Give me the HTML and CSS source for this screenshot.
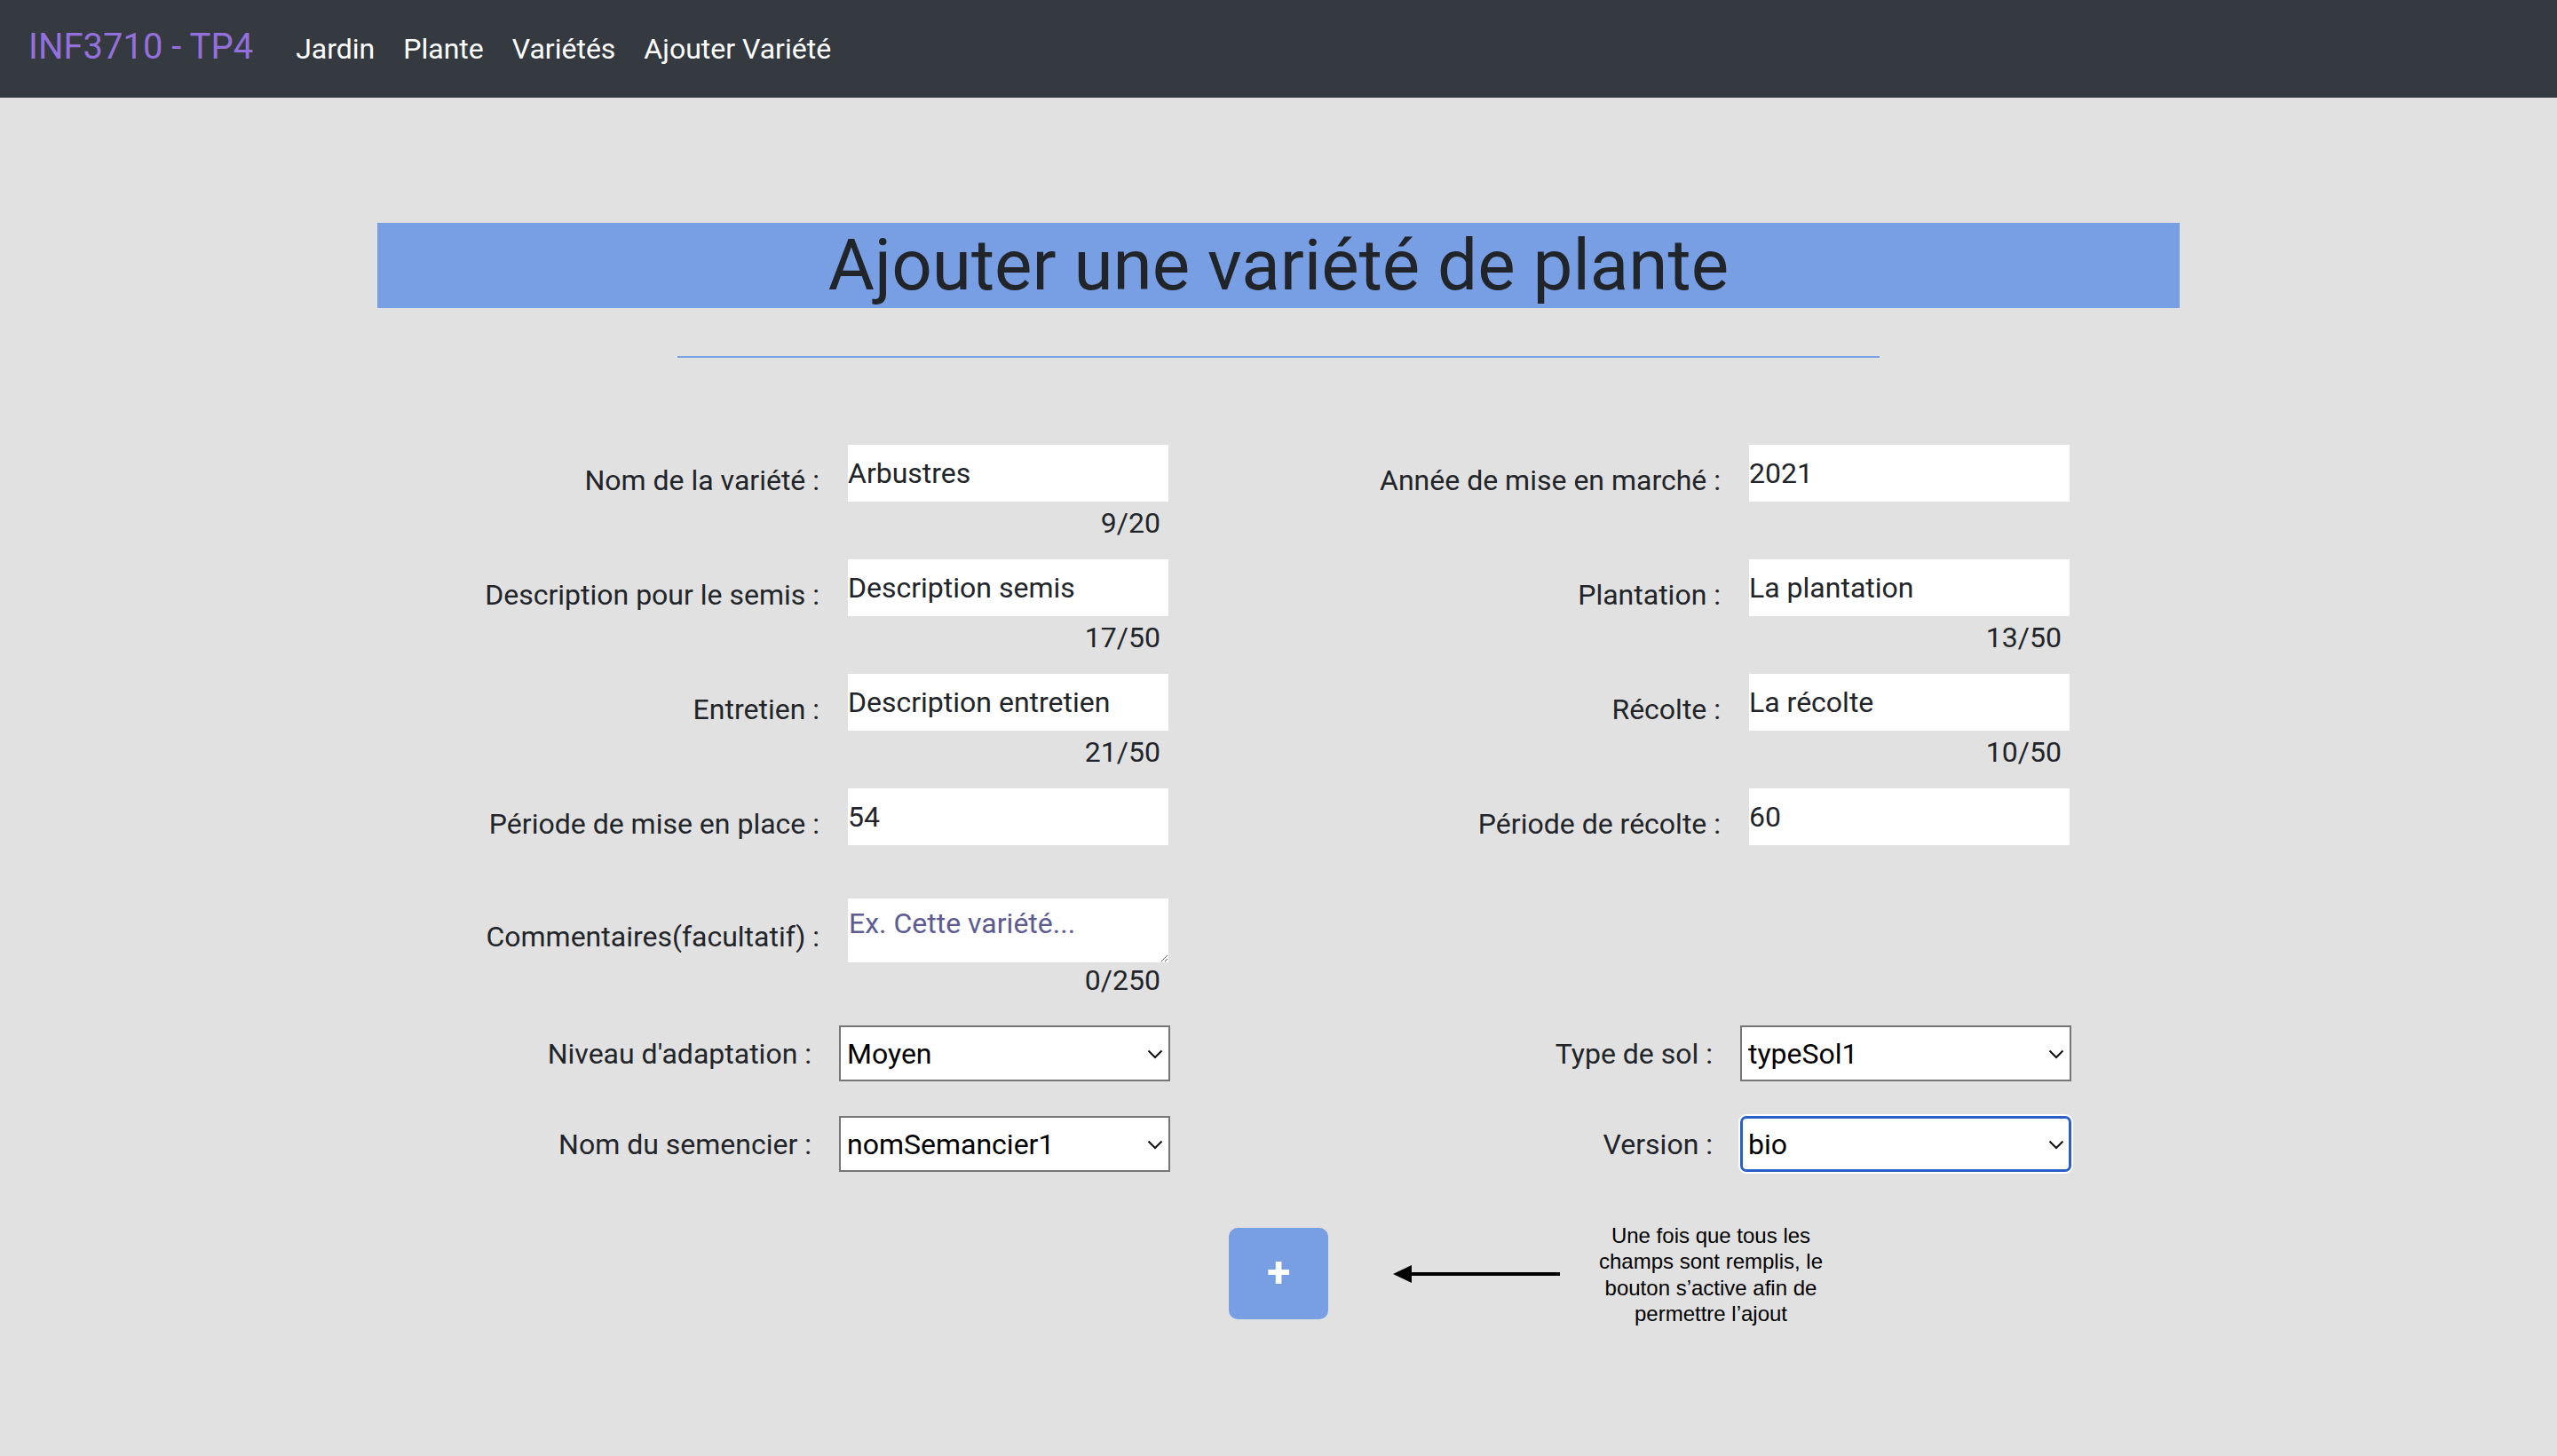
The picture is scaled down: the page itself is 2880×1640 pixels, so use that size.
FILE: index.html
```html
<!DOCTYPE html>
<html lang="fr">
<head>
<meta charset="utf-8">
<title>INF3710 - TP4</title>
<link rel="stylesheet" href="styles.css">
</head>
<body>
<nav class="navbar">
  <a class="brand" href="#">INF3710 - TP4</a>
  <a class="nav-link" href="#">Jardin</a>
  <a class="nav-link" href="#">Plante</a>
  <a class="nav-link" href="#">Variétés</a>
  <a class="nav-link" href="#">Ajouter Variété</a>
</nav>

<main class="page">
  <h1 class="title">Ajouter une variété de plante</h1>
  <div class="divider"></div>

  <form class="form">
    <div class="form-row">
      <div class="field">
        <label class="field-label">Nom de la variété :</label>
        <div class="field-box">
          <input class="text-input" type="text" value="Arbustres">
          <div class="counter">9/20</div>
        </div>
      </div>
      <div class="field">
        <label class="field-label">Année de mise en marché :</label>
        <div class="field-box">
          <input class="text-input" type="text" inputmode="numeric" value="2021">
        </div>
      </div>
    </div>

    <div class="form-row">
      <div class="field">
        <label class="field-label">Description pour le semis :</label>
        <div class="field-box">
          <input class="text-input" type="text" value="Description semis">
          <div class="counter">17/50</div>
        </div>
      </div>
      <div class="field">
        <label class="field-label">Plantation :</label>
        <div class="field-box">
          <input class="text-input" type="text" value="La plantation">
          <div class="counter">13/50</div>
        </div>
      </div>
    </div>

    <div class="form-row">
      <div class="field">
        <label class="field-label">Entretien :</label>
        <div class="field-box">
          <input class="text-input" type="text" value="Description entretien">
          <div class="counter">21/50</div>
        </div>
      </div>
      <div class="field">
        <label class="field-label">Récolte :</label>
        <div class="field-box">
          <input class="text-input" type="text" value="La récolte">
          <div class="counter">10/50</div>
        </div>
      </div>
    </div>

    <div class="form-row row-periods">
      <div class="field">
        <label class="field-label">Période de mise en place :</label>
        <div class="field-box">
          <input class="text-input" type="text" inputmode="numeric" value="54">
        </div>
      </div>
      <div class="field">
        <label class="field-label">Période de récolte :</label>
        <div class="field-box">
          <input class="text-input" type="text" inputmode="numeric" value="60">
        </div>
      </div>
    </div>

    <div class="form-row row-comment">
      <div class="field">
        <label class="field-label label-comment">Commentaires(facultatif) :</label>
        <div class="field-box">
          <textarea class="text-area" placeholder="Ex. Cette variété..."></textarea>
          <div class="counter counter-comment">0/250</div>
        </div>
      </div>
      <div class="field"></div>
    </div>

    <div class="form-row row-select">
      <div class="field field-select">
        <label class="field-label select-label">Niveau d'adaptation :</label>
        <div class="select-wrap">
          <select class="select"><option>Moyen</option></select>
          <svg class="chevron" width="18" height="11" viewBox="0 0 18 11"><polyline points="1.5,1.5 9,9 16.5,1.5" fill="none" stroke="#111" stroke-width="2"/></svg>
        </div>
      </div>
      <div class="field field-select">
        <label class="field-label select-label">Type de sol :</label>
        <div class="select-wrap">
          <select class="select"><option>typeSol1</option></select>
          <svg class="chevron" width="18" height="11" viewBox="0 0 18 11"><polyline points="1.5,1.5 9,9 16.5,1.5" fill="none" stroke="#111" stroke-width="2"/></svg>
        </div>
      </div>
    </div>

    <div class="form-row row-select row-last">
      <div class="field field-select">
        <label class="field-label select-label">Nom du semencier :</label>
        <div class="select-wrap">
          <select class="select"><option>nomSemancier1</option></select>
          <svg class="chevron" width="18" height="11" viewBox="0 0 18 11"><polyline points="1.5,1.5 9,9 16.5,1.5" fill="none" stroke="#111" stroke-width="2"/></svg>
        </div>
      </div>
      <div class="field field-select">
        <label class="field-label select-label">Version :</label>
        <div class="select-wrap">
          <select class="select select-focused"><option>bio</option></select>
          <svg class="chevron" width="18" height="11" viewBox="0 0 18 11"><polyline points="1.5,1.5 9,9 16.5,1.5" fill="none" stroke="#111" stroke-width="2"/></svg>
        </div>
      </div>
    </div>

    <div class="add-row">
      <div class="add-spacer"></div>
      <button class="add-button" type="button">+</button>
      <div class="hint">
        <svg class="hint-arrow" width="190" height="22" viewBox="0 0 190 22">
          <line x1="16" y1="11" x2="188" y2="11" stroke="#000" stroke-width="4"/>
          <polygon points="0,11 21,1 21,21" fill="#000"/>
        </svg>
        <p class="hint-text">Une fois que tous les<br>champs sont remplis, le<br>bouton s’active afin de<br>permettre l’ajout</p>
      </div>
    </div>
  </form>
</main>
</body>
</html>
```

FILE: styles.css
```css
* {
  box-sizing: border-box;
}

body {
  margin: 0;
  background: #e1e1e1;
  font-family: Roboto, "Noto Sans", Arial, sans-serif;
  color: #212529;
  min-height: 1640px;
}

/* ---------- Navbar ---------- */
.navbar {
  height: 110px;
  background: #343a40;
  display: flex;
  align-items: center;
  padding: 0 32px;
}

.brand {
  font-size: 40px;
  line-height: 60px;
  padding-bottom: 4px;
  color: #9370db;
  text-decoration: none;
  margin-right: 32px;
}

.nav-link {
  font-size: 32px;
  line-height: 48px;
  padding: 0 16px;
  color: #ffffff;
  text-decoration: none;
}

/* ---------- Page ---------- */
.page {
  width: 2030px;
  margin: 0 auto;
  padding-top: 141px;
}

.title {
  margin: 0;
  height: 96px;
  background: #789ee4;
  font-size: 80px;
  font-weight: 400;
  line-height: 96px;
  text-align: center;
  color: #212529;
}

.divider {
  width: 1354px;
  height: 2px;
  margin: 54px auto 0;
  background: #789ee4;
}

/* ---------- Form ---------- */
.form {
  margin-top: 98px;
}

.form-row {
  display: grid;
  grid-template-columns: 1015px 1015px;
  align-items: start;
  margin-bottom: 17px;
}

.field {
  display: flex;
  align-items: flex-start;
}

.field-label {
  width: 498px;
  flex: none;
  text-align: right;
  white-space: nowrap;
  font-size: 32px;
  line-height: 48px;
  padding-top: 16px;
  margin-right: 32px;
}

.field-box {
  width: 361px;
  flex: none;
}

.text-input {
  display: block;
  width: 361px;
  height: 64px;
  border: none;
  outline: none;
  background: #ffffff;
  padding: 0;
  font-family: Roboto, "Noto Sans", Arial, sans-serif;
  font-size: 32px;
  color: #212529;
}

.counter {
  text-align: right;
  padding-right: 9px;
  font-size: 32px;
  line-height: 48px;
}

.row-periods {
  margin-bottom: 60px;
}

.row-comment {
  margin-bottom: 27px;
}

.label-comment {
  padding-top: 19px;
}

.text-area {
  display: block;
  width: 361px;
  height: 72px;
  border: none;
  outline: none;
  background: #ffffff;
  padding: 4px 1px;
  font-family: Roboto, "Noto Sans", Arial, sans-serif;
  font-size: 32px;
  line-height: 48px;
  color: #212529;
}

.text-area::placeholder {
  color: #5d5b91;
  opacity: 1;
}

.counter-comment {
  margin-top: -4px;
}

/* ---------- Selects ---------- */
.row-select {
  margin-bottom: 39px;
}

.row-last {
  margin-bottom: 0;
}

.field-select {
  align-items: center;
}

.select-label {
  width: 489px;
  padding-top: 0;
  margin-right: 31px;
}

.select-wrap {
  position: relative;
  width: 373px;
  height: 63px;
  flex: none;
}

.select {
  -webkit-appearance: none;
  appearance: none;
  display: block;
  width: 373px;
  height: 63px;
  border: 2px solid #767676;
  border-radius: 0;
  background: #ffffff;
  padding: 0 40px 0 7px;
  font-family: Roboto, "Noto Sans", Arial, sans-serif;
  font-size: 32px;
  color: #000000;
  outline: none;
}

.select-focused {
  border: 3px solid #2b5fc8;
  border-radius: 7px;
  padding-left: 6px;
  box-shadow: 0 0 0 2px #ffffff;
}

.chevron {
  position: absolute;
  right: 8px;
  top: 27px;
  pointer-events: none;
}

/* ---------- Add row ---------- */
.add-row {
  margin-top: 63px;
  display: grid;
  grid-template-columns: 1fr 112px 1fr;
  align-items: start;
}

.add-button {
  width: 112px;
  height: 103px;
  border: none;
  border-radius: 10px;
  background: #789ee4;
  color: #ffffff;
  font-family: Roboto, "Noto Sans", Arial, sans-serif;
  font-size: 48px;
  font-weight: 700;
  line-height: 1;
  padding: 0 0 4px;
}

.hint {
  display: flex;
  align-items: flex-start;
  padding-left: 73px;
}

.hint-arrow {
  flex: none;
  margin-top: 41px;
}

.hint-text {
  margin: -6px 0 0 38px;
  width: 260px;
  text-align: center;
  font-family: "Liberation Sans", Arial, sans-serif;
  font-size: 24px;
  line-height: 29.4px;
  color: #000000;
}
```
